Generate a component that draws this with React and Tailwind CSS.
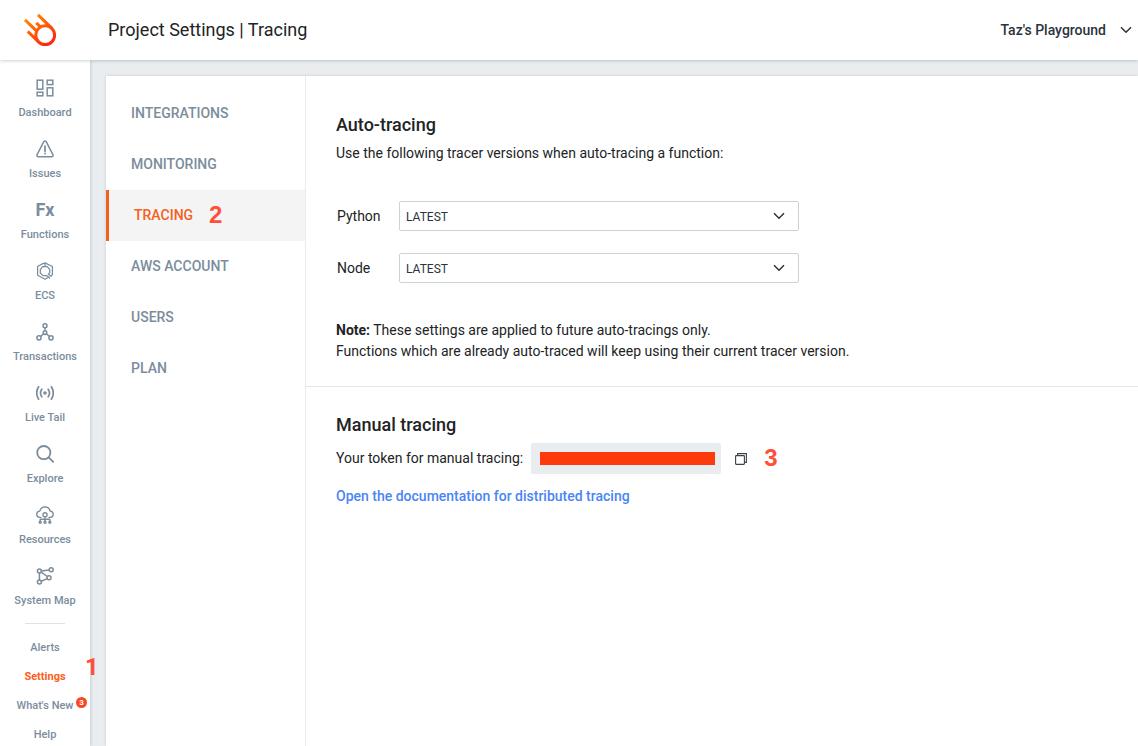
import React from "react";

const iconProps = {
  width: 18,
  height: 18,
  viewBox: "0 0 18 18",
  fill: "none",
  stroke: "currentColor",
  strokeWidth: 1.5,
  strokeLinecap: "round",
  strokeLinejoin: "round",
  "aria-hidden": true,
};

const icons = {
  dashboard: (
    <svg {...iconProps} strokeLinejoin="miter">
      <rect x="1.2" y="1.2" width="5.6" height="9" />
      <rect x="11.2" y="1.2" width="5.6" height="4.4" />
      <rect x="1.2" y="13.2" width="5.6" height="3.6" />
      <rect x="11.2" y="8.8" width="5.6" height="8" />
    </svg>
  ),
  issues: (
    <svg {...iconProps}>
      <path d="M7.8 1.6 1.1 14.6Q.4 16.7 2.4 16.7H15.6Q17.6 16.7 16.9 14.6L10.2 1.6Q9 .2 7.8 1.6Z" />
      <path d="M9 6.2V11.2M9 13.3V13.7" strokeWidth="1.7" />
    </svg>
  ),
  ecs: (
    <svg {...iconProps} strokeWidth="1.25">
      <path d="M7.2 1.4 1.6 4.5V13.2L9 17.2 13 15M15 13.6 16.4 12.8V4.5L9 .9 7.6 1.5M9 1V4.5" />
      <path d="M6.6 4.6 4.3 7.6V11L7 13.6H10.8L13.6 16M11.4 4.6 13.7 7.6V10.6L12.3 12.2 15.2 14.2M6.6 4.6H11.4" />
    </svg>
  ),
  transactions: (
    <svg {...iconProps}>
      <circle cx="9" cy="2.8" r="2" />
      <circle cx="9" cy="9.6" r="1.8" />
      <circle cx="3" cy="14.8" r="2.1" />
      <circle cx="15" cy="14.8" r="2.1" />
      <path d="M9 4.8V7.8M7.5 10.8 4.6 13.5M10.5 10.8 13.4 13.5" />
    </svg>
  ),
  liveTail: (
    <svg {...iconProps} strokeWidth="1.7">
      <circle cx="9" cy="9" r="1.8" fill="currentColor" stroke="none" />
      <path d="M5.8 5.2Q3.2 9 5.8 12.8M12.2 5.2Q14.8 9 12.2 12.8M2.6 2.8Q-1.2 9 2.6 15.2M15.4 2.8Q19.2 9 15.4 15.2" />
    </svg>
  ),
  explore: (
    <svg {...iconProps} strokeWidth="1.8">
      <circle cx="7.8" cy="7.6" r="6.6" />
      <path d="M12.6 12.4 17.2 16.8" />
    </svg>
  ),
  resources: (
    <svg {...iconProps} strokeWidth="1.35">
      <path d="M5 11.4H3.8Q.7 11 .7 8.2.8 5.5 3.8 5.2 4.8.8 9 .8 13.3.9 14.1 5 17.2 5.5 17.3 8.3 17.1 11.2 14.2 11.4H13" />
      <circle cx="9" cy="8.8" r="2.1" />
      <path d="M9 11V15M4.2 15V13.2H13.8V15" />
      <circle cx="4.2" cy="16.2" r="1" />
      <circle cx="9" cy="16.2" r="1" />
      <circle cx="13.8" cy="16.2" r="1" />
    </svg>
  ),
  systemMap: (
    <svg {...iconProps}>
      <circle cx="3.4" cy="4" r="2" />
      <circle cx="15.2" cy="2.8" r="2" />
      <circle cx="13" cy="10.8" r="2" />
      <circle cx="3.4" cy="15" r="2" />
      <path d="M5.4 3.9 13.2 3M3.4 6V13M5 5.2 11.4 9.5M5.3 14.3 11.2 11.6" />
    </svg>
  ),
};

const mainNav = [
  { label: "Dashboard", icon: icons.dashboard },
  { label: "Issues", icon: icons.issues },
  { label: "Functions", glyph: "Fx" },
  { label: "ECS", icon: icons.ecs },
  { label: "Transactions", icon: icons.transactions },
  { label: "Live Tail", icon: icons.liveTail },
  { label: "Explore", icon: icons.explore },
  { label: "Resources", icon: icons.resources },
  { label: "System Map", icon: icons.systemMap },
];

const tabs = ["INTEGRATIONS", "MONITORING", "TRACING", "AWS ACCOUNT", "USERS", "PLAN"];

function Logo() {
  return (
    <svg width="34" height="34" viewBox="0 0 34 34" fill="none" stroke="url(#comet)" strokeWidth="3" role="img" aria-label="Home">
      <defs>
        <linearGradient id="comet" gradientUnits="userSpaceOnUse" x1="6" y1="4" x2="24" y2="30">
          <stop offset="0" stopColor="#ff8a00" />
          <stop offset="1" stopColor="#ff2a12" />
        </linearGradient>
      </defs>
      <circle cx="22.2" cy="22.2" r="9.4" />
      <path d="M15 1.9 29.2 15.6M2 6.8 14 18.4M13.2 9.8 18 14.4M4.8 18.4 15.8 29.2" />
    </svg>
  );
}

function Chevron({ className = "" }) {
  return (
    <svg className={className} width="12" height="8" viewBox="0 0 12 8" fill="none" stroke="#2b333b" strokeWidth="1.5" aria-hidden="true">
      <path d="M1 1.2 6 6.2 11 1.2" />
    </svg>
  );
}

function Step({ children }) {
  return (
    <span className="block pb-[2px] font-['Liberation_Sans',sans-serif] text-2xl leading-6 font-bold text-[#ff4f38]">{children}</span>
  );
}

function VersionSelect({ id, label }) {
  return (
    <div className="flex items-center">
      <label htmlFor={id} className="w-[63px] shrink-0 pl-px">{label}</label>
      <div className="relative w-full max-w-[400px]">
        <select id={id} className="block h-[30px] w-full appearance-none rounded-xs border border-[#cbd3da] bg-white pt-[2px] pl-[6px] text-xs text-[#2b333b]">
          <option>LATEST</option>
        </select>
        <Chevron className="pointer-events-none absolute top-[11px] right-[14px]" />
      </div>
    </div>
  );
}

function Sidebar() {
  return (
    <nav className="relative z-10 flex w-[90px] shrink-0 flex-col items-center bg-white pt-[19px] text-[11px] leading-4 font-medium text-[#7b8d9c] shadow-[1px_0_3px_rgba(60,75,90,0.2)]">
      <ul className="flex flex-col gap-[19px]">
        {mainNav.map(({ label, icon, glyph }) => (
          <li key={label}>
            <a href="#" className="flex flex-col items-center gap-2">
              {icon || <span className="h-[18px] text-lg leading-[18px] font-bold">{glyph}</span>}
              <span>{label}</span>
            </a>
          </li>
        ))}
      </ul>
      <hr className="mt-[14px] w-10 border-[#dfe3e6]" />
      <ul className="mt-[14px] flex w-full flex-col gap-[9px] text-center leading-5">
        <li><a href="#">Alerts</a></li>
        <li className="relative">
          <a href="#" className="font-bold text-[#fb6018]">Settings</a>
          <span className="absolute -top-3 left-[85px] font-[Roboto,sans-serif] text-2xl leading-6 font-bold text-[#ff4f38]">1</span>
        </li>
        <li className="relative">
          <a href="#">What's New</a>
          <span className="absolute top-px right-[3px] flex size-[11px] items-center justify-center rounded-full bg-[#fb4626] text-[8px] leading-none font-bold text-white">3</span>
        </li>
        <li><a href="#">Help</a></li>
      </ul>
    </nav>
  );
}

export default function App() {
  return (
    <div className="flex min-h-screen flex-col bg-[#e9edf0] font-[Roboto,sans-serif] text-sm leading-[21px] text-[#212325]">
      <header className="relative z-20 flex h-[60px] shrink-0 items-center bg-white pr-[6px] pl-[23px] shadow-[0_1px_3px_rgba(60,75,90,0.25)]">
        <a href="#"><Logo /></a>
        <h1 className="ml-[51px] text-lg leading-6">Project Settings | Tracing</h1>
        <button type="button" className="ml-auto flex items-center gap-[14px] font-medium text-[#2b333b]">
          Taz's Playground
          <Chevron />
        </button>
      </header>
      <div className="flex flex-1">
        <Sidebar />
        <main className="flex min-w-0 flex-1 pt-4 pl-4">
          <div className="flex min-w-0 flex-1 bg-white shadow-[0_0_3px_rgba(60,75,90,0.2)]">
            <nav className="w-[200px] shrink-0 border-r border-[#e9ebed] pt-3 font-medium text-[#7b8d9c]">
              {tabs.map((tab) =>
                tab === "TRACING" ? (
                  <a key={tab} href="#" aria-current="page" className="flex h-[51px] items-center gap-4 border-l-3 border-[#f4611e] bg-[#f4f4f4] pl-[25px] text-[#f4611e]">
                    {tab}
                    <Step>2</Step>
                  </a>
                ) : (
                  <a key={tab} href="#" className="flex h-[51px] items-center pl-[25px]">{tab}</a>
                )
              )}
            </nav>
            <div className="min-w-0 flex-1">
              <section className="border-b border-[#e3e5ec] px-[30px] pt-[37px] pb-6">
                <h2 className="text-lg leading-6 font-medium">Auto-tracing</h2>
                <p className="mt-[6px]">Use the following tracer versions when auto-tracing a function:</p>
                <div className="mt-[37px] flex flex-col gap-[22px]">
                  <VersionSelect id="python-version" label="Python" />
                  <VersionSelect id="node-version" label="Node" />
                </div>
                <p className="mt-[37px]">
                  <strong className="font-bold">Note:</strong> These settings are applied to future auto-tracings only.
                  <br />
                  Functions which are already auto-traced will keep using their current tracer version.
                </p>
              </section>
              <section className="px-[30px] pt-[26px]">
                <h2 className="text-lg leading-6 font-medium">Manual tracing</h2>
                <div className="mt-[6px] flex items-center">
                  <span>Your token for manual tracing:</span>
                  <div className="ml-2 flex h-[31px] w-[190px] items-center rounded-xs bg-[#e9edf0] pr-[6px] pl-[9px]">
                    <div className="h-[13px] w-full bg-[#fd3a0b]" />
                  </div>
                  <button type="button" aria-label="Copy token" className="mr-[17px] ml-[14px]">
                    <svg width="12" height="12" viewBox="0 0 12 12" fill="none" stroke="#3b4248" strokeWidth="1.1" aria-hidden="true">
                      <rect x=".6" y="2.6" width="8.8" height="8.8" rx=".6" />
                      <path d="M2.6 2.4V.6H11.4V9.4H9.6" />
                    </svg>
                  </button>
                  <Step>3</Step>
                </div>
                <a href="#" className="mt-3 inline-block font-medium text-[#4a85f5]">Open the documentation for distributed tracing</a>
              </section>
            </div>
          </div>
        </main>
      </div>
    </div>
  );
}
